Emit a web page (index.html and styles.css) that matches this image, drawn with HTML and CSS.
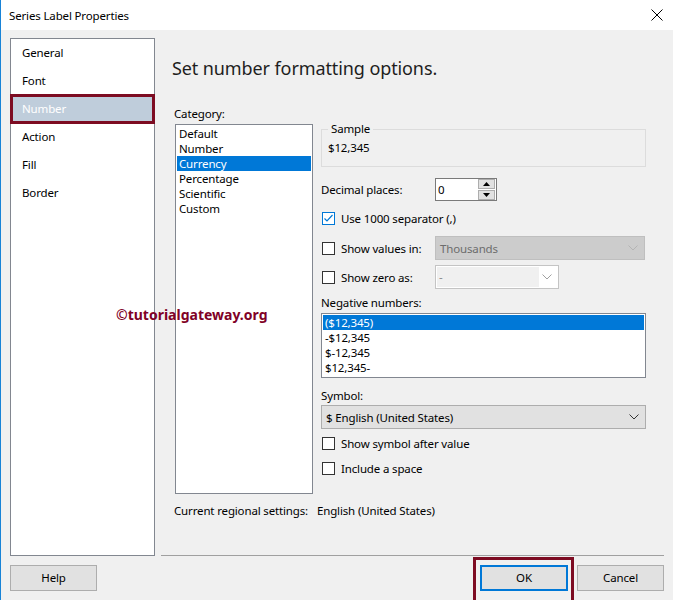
FILE: index.html
```html
<html>
<head>
    <link rel="stylesheet" href="styles.css">
</head>
<body>
    <div class="window">
        <div class="titlebar">
            <span class="title">Series Label Properties</span>
            <svg class="close" width="12" height="12" viewBox="0 0 12 12">
                <path d="M0.5 0.5 L11.5 11.5 M11.5 0.5 L0.5 11.5" stroke="#000" stroke-width="1" fill="none"/>
            </svg>
        </div>

        <div class="dialogBody">
            <div class="main">
                <ul class="nav">
                    <li>General</li>
                    <li>Font</li>
                    <li class="navActive">Number</li>
                    <li>Action</li>
                    <li>Fill</li>
                    <li>Border</li>
                </ul>

                <div class="content">
                    <h1 class="heading">Set number formatting options.</h1>

                    <div class="columns">
                        <div class="categoryCol">
                            <div class="label">Category:</div>
                            <ul class="listbox categoryList">
                                <li>Default</li>
                                <li>Number</li>
                                <li class="itemActive">Currency</li>
                                <li>Percentage</li>
                                <li>Scientific</li>
                                <li>Custom</li>
                            </ul>
                        </div>

                        <div class="optionsCol">
                            <fieldset class="sample">
                                <legend>Sample</legend>
                                <div class="sampleValue">$12,345</div>
                            </fieldset>

                            <div class="row decimalRow">
                                <span class="rowLabel">Decimal places:</span>
                                <div class="spinbox">
                                    <span class="spinValue">0</span>
                                    <div class="spinButtons">
                                        <span class="spinBtn">
                                            <svg width="7" height="4" viewBox="0 0 7 4"><path d="M0 4 L3.5 0 L7 4 Z" fill="#000"/></svg>
                                        </span>
                                        <span class="spinBtn">
                                            <svg width="7" height="4" viewBox="0 0 7 4"><path d="M0 0 L3.5 4 L7 0 Z" fill="#000"/></svg>
                                        </span>
                                    </div>
                                </div>
                            </div>

                            <div class="row checkRow separatorRow">
                                <span class="checkbox checked">
                                    <svg width="11" height="11" viewBox="0 0 11 11"><path d="M1.5 5.5 L4 8 L9.5 2" stroke="#0078d7" stroke-width="1.2" fill="none"/></svg>
                                </span>
                                <span>Use 1000 separator (,)</span>
                            </div>

                            <div class="row valuesRow">
                                <div class="checkLabel">
                                    <span class="checkbox"></span>
                                    <span>Show values in:</span>
                                </div>
                                <div class="dropdown disabledDrop valuesDrop">
                                    <span>Thousands</span>
                                    <svg class="chevron" width="10" height="6" viewBox="0 0 10 6"><path d="M0.5 0.5 L5 5 L9.5 0.5" stroke="#b4b4b4" fill="none"/></svg>
                                </div>
                            </div>

                            <div class="row zeroRow">
                                <div class="checkLabel">
                                    <span class="checkbox"></span>
                                    <span>Show zero as:</span>
                                </div>
                                <div class="dropdown zeroDrop">
                                    <span class="zeroField">-</span>
                                    <svg class="chevron" width="10" height="6" viewBox="0 0 10 6"><path d="M0.5 0.5 L5 5 L9.5 0.5" stroke="#a0a0a0" fill="none"/></svg>
                                </div>
                            </div>

                            <div class="label negLabel">Negative numbers:</div>
                            <ul class="listbox negList">
                                <li class="itemActive">($12,345)</li>
                                <li>-$12,345</li>
                                <li>$-12,345</li>
                                <li>$12,345-</li>
                            </ul>

                            <div class="label symbolLabel">Symbol:</div>
                            <div class="dropdown symbolDrop">
                                <span>$ English (United States)</span>
                                <svg class="chevron" width="10" height="6" viewBox="0 0 10 6"><path d="M0.5 0.5 L5 5 L9.5 0.5" stroke="#333" fill="none"/></svg>
                            </div>

                            <div class="row checkRow afterRow">
                                <span class="checkbox"></span>
                                <span>Show symbol after value</span>
                            </div>

                            <div class="row checkRow spaceRow">
                                <span class="checkbox"></span>
                                <span>Include a space</span>
                            </div>
                        </div>
                    </div>

                    <div class="regional">
                        <span class="regionalLabel">Current regional settings:</span>
                        <span>English (United States)</span>
                    </div>
                </div>
            </div>

            <div class="buttons">
                <span class="button helpBtn">Help</span>
                <div class="okHighlight">
                    <span class="button okBtn">OK</span>
                </div>
                <span class="button cancelBtn">Cancel</span>
            </div>
        </div>

        <div class="watermark">©tutorialgateway.org</div>
    </div>
</body>
</html>
```

FILE: styles.css
```css
html, body {
    margin: 0;
    padding: 0;
}

.window {
    position: relative;
    width: 673px;
    height: 600px;
    overflow: hidden;
    background-color: #f0f0f0;
    font-family: "Noto Sans", sans-serif;
    font-size: 11.5px;
    letter-spacing: -0.15px;
    color: #000000;
    box-sizing: border-box;
    border-left: 1px solid #1883d7;
    white-space: nowrap;
}

.titlebar {
    height: 30px;
    background-color: #ffffff;
    display: flex;
    align-items: center;
    justify-content: space-between;
    padding: 0 10px 0 8px;
}

.close {
    display: block;
}

.dialogBody {
    padding: 8px 9px 0 9px;
}

.main {
    display: flex;
    height: 518px;
}

/* left page list */
.nav {
    width: 146px;
    box-sizing: border-box;
    margin: 0;
    padding: 0;
    list-style: none;
    background-color: #ffffff;
    border: 1px solid #828790;
}

.nav li {
    height: 28px;
    line-height: 28px;
    padding-left: 11px;
}

.nav .navActive {
    background-color: #bfcddb;
    color: #ffffff;
    outline: 3px solid #7d0c22;
    outline-offset: -2px;
}

.content {
    flex: 1;
    margin-left: 6px;
    box-sizing: border-box;
    border-bottom: 1px solid #a0a0a0;
    padding: 0 18px 0 14px;
}

.heading {
    margin: 18px 0 0 -3px;
    font-size: 18px;
    font-weight: normal;
    letter-spacing: -0.1px;
    line-height: 24px;
    color: #1e1e1e;
}

.label {
    line-height: 16px;
    margin-left: -1px;
}

.columns {
    display: flex;
    align-items: flex-start;
    margin-top: 26px;
}

.categoryCol {
    width: 138px;
}

.listbox {
    margin: 0;
    padding: 1px;
    list-style: none;
    background-color: #ffffff;
    border: 1px solid #828790;
    box-sizing: border-box;
}

.listbox li {
    height: 15px;
    line-height: 15px;
    padding-left: 2px;
}

.listbox .itemActive {
    background-color: #0078d7;
    color: #ffffff;
}

.categoryList {
    margin-top: 2px;
    height: 370px;
}

.optionsCol {
    width: 325px;
    margin-left: 8px;
    margin-top: 15px;
}

.sample {
    margin: 0;
    padding: 3px 6px 10px 6px;
    border: 1px solid #dcdcdc;
}

.sample legend {
    padding: 0 3px;
    line-height: 16px;
}

.sampleValue {
    line-height: 16px;
}

.row {
    display: flex;
    align-items: center;
}

.rowLabel {
    width: 114px;
}

.decimalRow {
    margin-top: 11px;
}

.spinbox {
    width: 62px;
    height: 23px;
    box-sizing: border-box;
    border: 1px solid #7a7a7a;
    background-color: #ffffff;
    display: flex;
    align-items: center;
    justify-content: space-between;
    padding: 0 1px 0 2px;
}

.spinButtons {
    display: flex;
    flex-direction: column;
    gap: 1px;
}

.spinBtn {
    width: 15px;
    height: 8px;
    background-color: #e1e1e1;
    border: 1px solid #adadad;
    display: flex;
    align-items: center;
    justify-content: center;
}

.spinBtn svg {
    display: block;
}

.checkbox {
    width: 13px;
    height: 13px;
    box-sizing: border-box;
    border: 1px solid #333333;
    background-color: #ffffff;
    margin-left: 1px;
    margin-right: 6px;
    display: flex;
    align-items: center;
    justify-content: center;
    flex-shrink: 0;
}

.checkbox.checked {
    border-color: #0078d7;
}

.checkRow {
    height: 16px;
}

.separatorRow {
    margin-top: 9px;
}

.checkLabel {
    width: 114px;
    display: flex;
    align-items: center;
}

.dropdown {
    height: 24px;
    box-sizing: border-box;
    display: flex;
    align-items: center;
    justify-content: space-between;
    padding: 0 6px 0 4px;
}

.disabledDrop {
    background-color: #cccccc;
    border: 1px solid #bfbfbf;
    color: #6d6d6d;
}

.valuesDrop {
    width: 210px;
}

.valuesRow {
    margin-top: 10px;
}

.zeroRow {
    margin-top: 5px;
}

.zeroDrop {
    width: 124px;
    background-color: #ffffff;
    border: 1px solid #c4c4c4;
    padding: 1px 6px 1px 1px;
}

.zeroField {
    width: 100px;
    height: 100%;
    background-color: #f0f0f0;
    color: #8a8a8a;
    padding-left: 2px;
    line-height: 20px;
}

.negLabel {
    margin-top: 6px;
    margin-left: 0;
}

.negList {
    margin-top: 2px;
    height: 65px;
}

.symbolLabel {
    margin-top: 10px;
    margin-left: 0;
}

.symbolDrop {
    margin-top: 1px;
    background-color: #e1e1e1;
    border: 1px solid #adadad;
}

.afterRow {
    margin-top: 6px;
}

.spaceRow {
    margin-top: 9px;
}

.regional {
    display: flex;
    margin-top: 9px;
    line-height: 16px;
    margin-left: -1px;
}

.regionalLabel {
    width: 143px;
}

/* bottom buttons */
.buttons {
    display: flex;
    align-items: flex-start;
    margin-top: 1px;
}

.button {
    display: block;
    width: 87px;
    height: 26px;
    box-sizing: border-box;
    background-color: #e1e1e1;
    border: 1px solid #adadad;
    text-align: center;
    line-height: 24px;
}

.helpBtn, .cancelBtn {
    margin-top: 8px;
}

.okHighlight {
    margin-left: auto;
    border: 3px solid #7d0c22;
    padding: 5px 3px 10px 4px;
}

.okBtn {
    width: 88px;
    border: 2px solid #0078d7;
    line-height: 22px;
}

.cancelBtn {
    margin-left: 3px;
}

.watermark {
    position: absolute;
    left: 115px;
    top: 306px;
    font-size: 14px;
    font-weight: bold;
    letter-spacing: 0;
    line-height: 18px;
    color: #800026;
}
```
